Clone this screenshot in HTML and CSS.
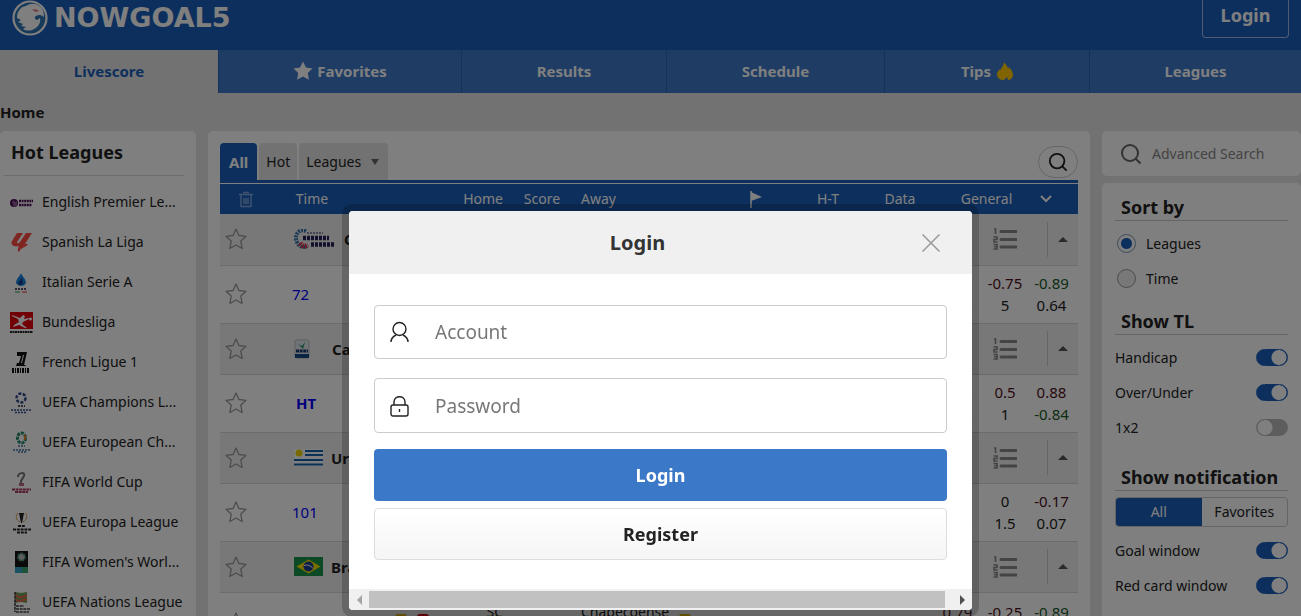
FILE: index.html
```
<!DOCTYPE html>
<html lang="en">
<head>
    <meta charset="UTF-8">
    <meta name="viewport" content="width=device-width, initial-scale=1.0">
    <title>NowGoal Livescore</title>
    <link rel="stylesheet" href="styles.css">
</head>
<body>
    <!-- shared icons -->
    <svg class="sprite" aria-hidden="true">
        <symbol id="star" viewBox="0 0 22 22"><path d="M11 1l2.900 6.500 7.100.8-5.200 4.800 1.300 7.400-6.100-3.500-6.100 3.500 1.300-7.400L1 8.300l7.100-.8z" fill="none" stroke="#999" stroke-width="1.300" stroke-linejoin="round"/></symbol>
        <symbol id="list" viewBox="0 0 24 24">
            <path d="M8 4.500h15M8 12.500h15M8 20h15" stroke="#888" stroke-width="3" stroke-linecap="round"/>
            <path d="M1 2h1.500v5M.5 10H4v2.500H1V15h3.500M.5 17.500H4V22H.5M1 19.700h3" fill="none" stroke="#888" stroke-width="1.600"/>
        </symbol>
        <symbol id="search" viewBox="0 0 22 22"><circle cx="10" cy="10" r="8" fill="none" stroke="currentColor" stroke-width="2"/><path d="M15.500 15.500l5 5" stroke="currentColor" stroke-width="2"/></symbol>
    </svg>

    <header class="header">
        <a href="#" class="logo">
            <svg width="36" height="36" viewBox="0 0 36 36">
                <circle cx="18" cy="18" r="16.500" fill="#2f73b5" stroke="#fff" stroke-width="2.200"/>
                <path d="M5 16C6 10 10 6 14 6c4-3 10-3 13 0 4 2 5 6 5 11-2-2-5-3-8-1-2 1-1 4 1 4l3-2c1 5-2 9-6 11-3 2-8 2-11 0l3-2-5-1 2-2-5-2 3-2-4-2z" fill="#fff"/>
                <path d="M20 10c2-1 5-1 7 1l-3 1z" fill="#e08080"/>
            </svg>
            <span>NOWGOAL5</span>
        </a>
        <button type="button" class="header-login">Login</button>
    </header>

    <nav class="nav">
        <a href="#" class="active">Livescore</a>
        <a href="#"><svg width="20" height="20" viewBox="0 0 20 20"><path d="M10 0.500l3 6 6.500 1-4.700 4.600 1.100 6.600L10 15.600l-5.900 3.100 1.100-6.600L.5 7.500l6.500-1z" fill="#fff"/></svg>Favorites</a>
        <a href="#">Results</a>
        <a href="#">Schedule</a>
        <a href="#">Tips<svg class="flame" width="16" height="20" viewBox="0 0 16 20"><path d="M7 1c1 2 4 4 4 7l1-2c2 2 4 5 4 8 0 3-3 5-5 5l-1-3-2 2-1 1c-4 0-7-2-7-6 0-2 2-4 3-5l1 1c0-3 3-4 3-8z" fill="#ffc800"/></svg></a>
        <a href="#">Leagues</a>
    </nav>

    <div class="breadcrumb">Home</div>

    <div class="page">
        <aside class="card hot">
            <h2>Hot Leagues</h2>
            <ul>
                <li><svg viewBox="0 0 24 24"><circle cx="4" cy="13" r="4" fill="#4a0f55"/><path d="M2 12l2-2 1 2 2-1v4l-3 2" fill="#8d5b96"/><path d="M9 11h14M9 15h13" stroke="#4a0f55" stroke-width="2.500" stroke-dasharray="2 .6"/></svg><a href="#">English Premier Le...</a></li>
                <li><svg viewBox="0 0 24 24"><path d="M7 3h6L7 12c0 2 2 1 3 0l6-9h6l-7 11h3c-2 4-6 2-9 8-2-1-1-4 0-6-5 1-9-1-7-5z" fill="#ff4b44"/></svg><a href="#">Spanish La Liga</a></li>
                <li><svg viewBox="0 0 24 24"><path d="M11 3c1 3 5 6 5 10-2 4-8 4-10 0 0-4 4-7 5-10z" fill="#1683d8"/><path d="M8 13l4-5 1 6-4 1" fill="#123a8c"/><path d="M5 19h12" stroke="#557" stroke-width="2" stroke-dasharray="2 1"/><path d="M5 22h5" stroke="#2a9a50"/><path d="M12 22h5" stroke="#e33"/></svg><a href="#">Italian Serie A</a></li>
                <li><svg viewBox="0 0 24 24"><path d="M0 2h23v17H0z" fill="#e3000f"/><path d="M2 5l8 3 3-3 2 1-1 3 5-1v1l-6 3-1 2 5 4h-2l-6-3-6 2 1-2 5-3-1-3-6-3z" fill="#fff"/><circle cx="20.500" cy="9" r="1.500" fill="#fff"/><path d="M0 22h23" stroke="#222" stroke-width="2" stroke-dasharray="2 .5"/></svg><a href="#">Bundesliga</a></li>
                <li><svg viewBox="0 0 24 24"><path d="M7 2h10l-3 13h2l-1 1H6l1-3h2l2-7H7zM13 5l-2 8h1l2-8z" fill="#111" fill-rule="evenodd"/><path d="M2 20.500h18" stroke="#111" stroke-width="5" stroke-dasharray="2 1 1 1"/></svg><a href="#">French Ligue 1</a></li>
                <li><svg viewBox="0 0 24 24"><circle cx="11" cy="8" r="4.500" fill="none" stroke="#334a8d" stroke-width="2.500" stroke-dasharray="3 1.500"/><path d="M8 16h7" stroke="#556" stroke-width="2" stroke-dasharray="2 1"/><path d="M1 20h20M5 22.500h12" stroke="#334a8d" stroke-width="1.500" stroke-dasharray="2 1"/></svg><a href="#">UEFA Champions L...</a></li>
                <li><svg viewBox="0 0 24 24"><ellipse cx="11.500" cy="8" rx="4" ry="5" fill="none" stroke="#268b6e" stroke-width="3" stroke-dasharray="3 1"/><path d="M15 5v5" stroke="#d97c2c" stroke-width="2"/><path d="M8 16h7M3 20h17M8 22h8" stroke="#4172a5" stroke-width="1.500" stroke-dasharray="2 1"/></svg><a href="#">UEFA European Ch...</a></li>
                <li><svg viewBox="0 0 24 24"><path d="M8 7c0-5 8-5 6-1l-3 5v5" fill="none" stroke="#777" stroke-width="2"/><path d="M9 13h5v3H9z" fill="#b66c80"/><path d="M2 19.500h19M5 22h13" stroke="#a8385a" stroke-width="1.800" stroke-dasharray="3 .6"/></svg><a href="#">FIFA World Cup</a></li>
                <li><svg viewBox="0 0 24 24"><path d="M8 3c-3 3-2 7 2 9M15 3c3 3 2 7-2 9" fill="none" stroke="#d79b50"/><path d="M9 3h5l-2 10h-1z" fill="#222"/><path d="M8 16h7M3 19.500h18M7 22.500h10" stroke="#222" stroke-width="2" stroke-dasharray="3 .8"/></svg><a href="#">UEFA Europa League</a></li>
                <li><svg viewBox="0 0 24 24"><path d="M5 1h13v16H5z" fill="#151515"/><circle cx="11.500" cy="7" r="3.500" fill="#bbb" stroke="#4a9a78" stroke-width="2" stroke-dasharray="2 1"/><path d="M5 17h7v6H5z" fill="#35a5c7"/><path d="M12 17h6v6h-6z" fill="#3aa870"/></svg><a href="#">FIFA Women's Worl...</a></li>
                <li><svg viewBox="0 0 24 24"><path d="M5 2l6 1 6-1v11l-6-1-6 1z" fill="#6fa05c"/><path d="M5 5l6 3 6-3M5 10l6 1 6-2" fill="none" stroke="#e46a4a" stroke-width="2"/><path d="M5 2v20M6 16h8M6 19h14M6 22h13" stroke="#444" stroke-width="1.600" stroke-dasharray="3 .7"/></svg><a href="#">UEFA Nations League</a></li>
            </ul>
        </aside>

        <main class="card matches">
            <div class="tabs">
                <button type="button" class="tab on">All</button>
                <button type="button" class="tab">Hot</button>
                <button type="button" class="tab">Leagues<i class="caret"></i></button>
                <button type="button" class="tab-search" aria-label="Search"><svg width="20" height="20"><use href="#search"/></svg></button>
            </div>
            <table class="live">
                <colgroup>
                    <col class="c-star"><col class="c-time"><col class="c-home"><col class="c-score"><col>
                    <col class="c-mid"><col class="c-mid"><col class="c-mid"><col class="c-o1"><col class="c-o2"><col class="c-o3">
                </colgroup>
                <thead>
                    <tr>
                        <th><svg width="16" height="17" viewBox="0 0 16 17"><path d="M1 3.500h14M5 1.500h6M3 4v11.500h10V4M6 7v6M8 7v6M10 7v6" fill="none" stroke="#7fa6dc" stroke-width="1.400"/></svg></th>
                        <th>Time</th>
                        <th class="right">Home</th>
                        <th>Score</th>
                        <th class="left">Away</th>
                        <th><svg width="12" height="17" viewBox="0 0 12 17"><path d="M1 0v17" stroke="#fff" stroke-width="1.500"/><path d="M1 1l11 5-11 4z" fill="#fff"/></svg></th>
                        <th>H-T</th>
                        <th>Data</th>
                        <th colspan="2" class="general">General</th>
                        <th class="more"><svg width="12" height="8" viewBox="0 0 12 8"><path d="M1 1l5 5 5-5" fill="none" stroke="#fff" stroke-width="2"/></svg></th>
                    </tr>
                </thead>
                <tbody>
                    <tr class="league">
                        <td class="fav"><svg width="22" height="22"><use href="#star"/></svg></td>
                        <td colspan="8" class="name"><div><svg width="42" height="20" viewBox="0 0 42 20"><path d="M12 2C4-1 0 7 3 13c2 5 6 6 10 4" fill="none" stroke="#3976a8" stroke-width="4" stroke-dasharray="2 1"/><path d="M6 14c2 3 4 4 8 2" fill="none" stroke="#d8364c" stroke-width="5" stroke-dasharray="2 1"/><path d="M13 4h16" stroke="#88a" stroke-width="2" stroke-dasharray="2 1"/><path d="M9 9h26M17 15.500h24" stroke="#252058" stroke-width="4.500" stroke-dasharray="3 1"/></svg>CONCACAF</div></td>
                        <td><svg width="24" height="24"><use href="#list"/></svg></td>
                        <td class="fold"><div><i class="up"></i></div></td>
                    </tr>
                    <tr class="match">
                        <td class="fav"><svg width="22" height="22"><use href="#star"/></svg></td>
                        <td class="time">72</td>
                        <td colspan="6"></td>
                        <td>0.7<br>0.93</td>
                        <td><span class="down">-0.75</span><br>5</td>
                        <td class="last"><span class="win">-0.89</span><br>0.64</td>
                    </tr>
                    <tr class="league">
                        <td class="fav"><svg width="22" height="22"><use href="#star"/></svg></td>
                        <td colspan="8" class="name"><div><svg width="16" height="20" viewBox="0 0 16 20"><rect x="1" y="1" width="14" height="18" rx="2" fill="#e2e8ee" stroke="#bbb"/><path d="M4 5l4 2 3-4-2 7z" fill="#29966b"/><path d="M2 12h12" stroke="#183b70" stroke-width="3" stroke-dasharray="3 .6"/><path d="M1 15h14v4H1z" fill="#164984"/></svg><span class="gap">Ca</span></div></td>
                        <td><svg width="24" height="24"><use href="#list"/></svg></td>
                        <td class="fold"><div><i class="up"></i></div></td>
                    </tr>
                    <tr class="match">
                        <td class="fav"><svg width="22" height="22"><use href="#star"/></svg></td>
                        <td class="time half">HT</td>
                        <td colspan="6"></td>
                        <td><span class="down">0.93</span><br><span class="win">0.92</span></td>
                        <td><span class="down">0.5</span><br>1</td>
                        <td class="last"><span class="down">0.88</span><br><span class="win">-0.84</span></td>
                    </tr>
                    <tr class="league">
                        <td class="fav"><svg width="22" height="22"><use href="#star"/></svg></td>
                        <td colspan="8" class="name"><div><svg width="29" height="19" viewBox="0 0 29 19"><path d="M0 1h29v17H0z" fill="#fff"/><path d="M11 3h18M11 7h18M0 12h29M0 16.500h29" stroke="#1765ad" stroke-width="2"/><circle cx="5" cy="5" r="3.500" fill="#f2d400"/></svg>Uruguay</div></td>
                        <td><svg width="24" height="24"><use href="#list"/></svg></td>
                        <td class="fold"><div><i class="up"></i></div></td>
                    </tr>
                    <tr class="match">
                        <td class="fav"><svg width="22" height="22"><use href="#star"/></svg></td>
                        <td class="time">101</td>
                        <td colspan="6"></td>
                        <td>0.7<br>0.93</td>
                        <td>0<br>1.5</td>
                        <td class="last"><span class="down">-0.17</span><br>0.07</td>
                    </tr>
                    <tr class="league">
                        <td class="fav"><svg width="22" height="22"><use href="#star"/></svg></td>
                        <td colspan="8" class="name"><div><svg width="29" height="19" viewBox="0 0 29 19"><path d="M0 0h29v19H0z" fill="#17954b"/><path d="M14.500 2.500l12 7-12 7-12-7z" fill="#f5dc00"/><circle cx="14.500" cy="9.500" r="5" fill="#1b3f91"/><path d="M10 8.500c3-1 7 0 9 3" fill="none" stroke="#fff"/></svg>Brazil</div></td>
                        <td><svg width="24" height="24"><use href="#list"/></svg></td>
                        <td class="fold"><div><i class="up"></i></div></td>
                    </tr>
                    <tr class="match tall">
                        <td class="fav"><svg width="22" height="22"><use href="#star"/></svg></td>
                        <td></td>
                        <td class="home"><div><i class="booking"></i><i class="booking red"></i><span>SC</span></div></td>
                        <td></td>
                        <td class="away" colspan="2"><div><span>Chapecoense</span><i class="booking"></i></div></td>
                        <td></td>
                        <td><div class="tools"><svg width="14" height="12" viewBox="0 0 14 12"><path d="M0 5c4-5 6-4 8-2s4-1 6-2" fill="none" stroke="#555" stroke-width="2"/></svg><svg width="16" height="12" viewBox="0 0 16 12"><path d="M1 1h14v10H1z" fill="none" stroke="#2e6b2e" stroke-width="2"/></svg></div></td>
                        <td><span class="down">0.79</span><br>0.93</td>
                        <td><span class="down">-0.25</span><br>2</td>
                        <td class="last"><span class="win">-0.89</span><br>0.95</td>
                    </tr>
                </tbody>
            </table>
        </main>

        <aside class="side">
            <label class="card advanced">
                <svg width="22" height="22"><use href="#search"/></svg>
                <input type="text" placeholder="Advanced Search">
            </label>
            <div class="card settings">
                <h3>Sort by</h3>
                <label class="radio"><input type="radio" name="sort" checked>Leagues</label>
                <label class="radio"><input type="radio" name="sort">Time</label>
                <h3>Show TL</h3>
                <label class="switch">Handicap<input type="checkbox" checked></label>
                <label class="switch">Over/Under<input type="checkbox" checked></label>
                <label class="switch">1x2<input type="checkbox"></label>
                <h3 class="notify">Show notification</h3>
                <div class="segment">
                    <button type="button" class="on">All</button>
                    <button type="button">Favorites</button>
                </div>
                <label class="switch">Goal window<input type="checkbox" checked></label>
                <label class="switch">Red card window<input type="checkbox" checked></label>
            </div>
        </aside>
    </div>

    <div class="overlay">
        <div class="modal" role="dialog" aria-labelledby="loginTitle">
            <div class="modal-head">
                <h2 id="loginTitle">Login</h2>
                <button type="button" class="close" aria-label="Close"><svg width="18" height="18" viewBox="0 0 18 18"><path d="M.5.5l17 17M17.500.5l-17 17" stroke="#999" stroke-width="1.500"/></svg></button>
            </div>
            <form class="login-form">
                <label class="field">
                    <svg width="20" height="22" viewBox="0 0 20 22"><circle cx="9.500" cy="8" r="6.500" fill="none" stroke="#222" stroke-width="1.400"/><path d="M1 21c0-4 3-6 5-7M18 21c0-4-3-6-5-7" fill="none" stroke="#222" stroke-width="1.400"/></svg>
                    <input type="text" name="account" placeholder="Account">
                </label>
                <label class="field password">
                    <svg width="20" height="22" viewBox="0 0 20 22"><rect x="1" y="10" width="17" height="11" rx="2" fill="none" stroke="#222" stroke-width="1.400"/><path d="M4 10V7c0-7 11-7 11 0v3M9.500 14v3" fill="none" stroke="#222" stroke-width="1.400"/></svg>
                    <input type="password" name="password" placeholder="Password">
                </label>
                <button type="button" class="btn primary">Login</button>
                <button type="button" class="btn">Register</button>
            </form>
            <div class="scrollbar"><i class="arrow prev"></i><div class="thumb"></div><i class="arrow next"></i></div>
        </div>
    </div>
</body>
</html>
```
FILE: styles.css
```
* {
    box-sizing: border-box;
}
body {
    margin: 0;
    height: 100vh;
    overflow: hidden;
    background: #e4e4e4;
    color: #222;
    font-family: "Noto Sans", "Open Sans", sans-serif;
    font-size: 14px;
    line-height: 22px;
}
a {
    color: inherit;
    text-decoration: none;
}
button, input {
    font: inherit;
    color: inherit;
    margin: 0;
}
button {
    border: none;
    background: none;
    padding: 0;
    cursor: pointer;
}
h2, h3, ul {
    margin: 0;
    padding: 0;
}
svg {
    display: block;
    flex: none;
}
.sprite {
    display: none;
}
.card {
    background: #fff;
    border-radius: 5px;
}

/* header */
.header {
    display: flex;
    justify-content: space-between;
    align-items: flex-start;
    height: 50px;
    padding: 0 12px;
    background: #1b5fbb;
    color: #fff;
}
.logo {
    display: flex;
    align-items: center;
    gap: 6px;
    font-family: "DejaVu Sans", sans-serif;
    font-size: 27px;
    font-weight: bold;
    line-height: 36px;
}
.header-login {
    width: 87px;
    height: 38px;
    padding-bottom: 7px;
    border: 1px solid #9bbbe6;
    border-top: none;
    border-radius: 0 0 4px 4px;
    font-size: 18px;
    font-weight: bold;
}
.nav {
    display: grid;
    grid-template-columns: 219fr 243fr 205fr 218fr 205fr 211fr;
    height: 43px;
    background: #3c78c8;
    color: #fff;
    font-size: 15px;
    font-weight: bold;
}
.nav a {
    display: flex;
    align-items: center;
    justify-content: center;
    gap: 4px;
    padding-bottom: 2px;
    border-right: 1px solid #2a62ae;
}
.nav a:last-child {
    border-right: none;
}
.nav .active {
    background: #e4e4e4;
    color: #1b5fbb;
}
.flame {
    margin-left: 2px;
}
.breadcrumb {
    padding: 8px 0;
    font-size: 15px;
    font-weight: bold;
}
.page {
    display: grid;
    grid-template-columns: 196px 1fr 199px;
    gap: 12px;
}

/* hot leagues */
.hot {
    padding: 0 12px 0 4px;
}
.hot h2 {
    height: 45px;
    padding-left: 7px;
    border-bottom: 1px solid #d8d8d8;
    font-size: 18px;
    line-height: 43px;
}
.hot ul {
    padding-top: 6px;
    list-style: none;
}
.hot li {
    display: flex;
    align-items: center;
    gap: 8px;
    height: 40px;
    padding-left: 6px;
    white-space: nowrap;
}
.hot li svg {
    width: 24px;
    height: 24px;
}

/* match list */
.matches {
    padding: 12px 12px 0;
}
.tabs {
    display: flex;
    gap: 2px;
    margin-bottom: 1px;
    border-bottom: 3px solid #1b5fbb;
}
.tab {
    display: flex;
    align-items: center;
    gap: 10px;
    height: 37px;
    padding: 0 7px;
    border-radius: 4px 4px 0 0;
    background: #e4e4e4;
}
.tab.on {
    padding: 0 9px;
    background: #1b5fbb;
    color: #fff;
    font-size: 15px;
    font-weight: bold;
}
.caret {
    margin-right: 2px;
    border: 4px solid transparent;
    border-top: 6px solid #666;
    border-bottom: none;
}
.tab-search {
    display: flex;
    align-items: center;
    justify-content: center;
    width: 40px;
    height: 32px;
    margin: 3px 0 0 auto;
    border: 1px solid #ccc;
    border-radius: 16px;
}
.live {
    width: 100%;
    table-layout: fixed;
    border-collapse: collapse;
    text-align: center;
    white-space: nowrap;
}
.c-star {
    width: 52px;
}
.c-time {
    width: 80px;
}
.c-home {
    width: 151px;
}
.c-score {
    width: 78px;
}
.c-mid {
    width: 72px;
}
.c-o1 {
    width: 43px;
}
.c-o2 {
    width: 52px;
}
.c-o3 {
    width: 47px;
}
.live th, .live td {
    padding: 0;
}
.live svg {
    margin: 0 auto;
}
.live th {
    height: 30px;
    background: #1b5fbb;
    color: #fff;
    font-weight: normal;
}
.live .right {
    text-align: right;
}
.live .left {
    text-align: left;
}
.live .general {
    padding-left: 6px;
}
.live .more {
    padding-right: 18px;
}
.league td, .match td {
    border-bottom: 1px solid #d8d8d8;
    font-size: 15px;
}
.league td {
    height: 51px;
    background: #f1f1f1;
}
.match td {
    height: 58px;
}
.match.tall td {
    height: 61px;
}
.live .fav {
    padding-left: 5px;
}
.live .fav svg, .live .name svg {
    margin: 0;
}
.live .name {
    padding-left: 22px;
    font-weight: bold;
}
.name div {
    display: flex;
    align-items: center;
    gap: 8px;
}
.gap {
    padding-left: 14px;
}
.fold div {
    display: flex;
    align-items: center;
    justify-content: center;
    height: 35px;
    margin-left: 16px;
    border-left: 1px solid #ccc;
}
.up {
    border: 5px solid transparent;
    border-bottom: 5px solid #555;
    border-top: none;
}
.live .time {
    padding-left: 20px;
    color: #00f;
    text-align: left;
}
.live .half {
    padding-left: 24px;
    font-weight: bold;
}
.live .last {
    padding-right: 6px;
}
.down {
    color: #501020;
}
.win {
    color: #1a5b2a;
}
.home div, .away div {
    display: flex;
    gap: 10px;
    height: 44px;
    font-size: 14px;
}
.home span {
    margin-left: auto;
}
.home div {
    padding-left: 43px;
}
.booking {
    width: 12px;
    height: 16px;
    margin-top: 13px;
    border-radius: 3px;
    background: #f0c000;
}
.booking.red {
    background: #e60012;
}
.tools {
    display: flex;
    gap: 6px;
    padding-top: 12px;
}

/* right column */
.advanced {
    display: flex;
    align-items: center;
    gap: 8px;
    height: 45px;
    margin-bottom: 7px;
    padding-left: 18px;
    color: #666;
}
.advanced input {
    width: 100%;
    min-width: 0;
    border: none;
    background: none;
    outline: none;
}
.advanced input::placeholder {
    color: #888;
}
.settings {
    padding: 10px 13px 32px;
}
.settings h3 {
    height: 28px;
    margin: 11px 0 5px;
    padding-left: 6px;
    border-bottom: 1px solid #ccc;
    font-size: 18px;
    line-height: 28px;
    white-space: nowrap;
}
.settings h3:first-child {
    margin-top: 0;
}
.settings .notify {
    margin: 18px 0 6px;
}
.radio, .switch {
    display: flex;
    align-items: center;
    height: 35px;
}
.radio {
    gap: 10px;
    padding-left: 2px;
}
.radio input {
    appearance: none;
    width: 19px;
    height: 19px;
    border: 1px solid #999;
    border-radius: 50%;
    background: #f0f0f0;
}
.radio input:checked {
    border-color: #7f95b5;
    background: radial-gradient(circle, #1b5fbb 5px, transparent 6px);
}
.switch {
    justify-content: space-between;
}
.switch input {
    appearance: none;
    width: 32px;
    height: 17px;
    border: 1px solid #bbb;
    border-radius: 9px;
    background: radial-gradient(circle at 8px 50%, #fff 7px, #bbb 8px);
}
.switch input:checked {
    border-color: #1b5fbb;
    background: radial-gradient(circle at 22px 50%, #fff 7px, #1b5fbb 8px);
}
.segment {
    display: grid;
    grid-template-columns: 1fr 1fr;
    height: 30px;
    margin-bottom: 6px;
    border: 1px solid #ccc;
    border-radius: 4px;
    overflow: hidden;
}
.segment .on {
    background: #1b5fbb;
    color: #fff;
}

/* login dialog */
.overlay {
    position: fixed;
    inset: 0;
    display: flex;
    justify-content: center;
    align-items: flex-start;
    padding: 211px 0 0 20px;
    background: rgba(0, 0, 0, 0.5);
}
.modal {
    width: 623px;
    border-radius: 4px;
    background: #fff;
    box-shadow: 0 0 0 7px rgba(0, 0, 0, 0.2);
    overflow: hidden;
}
.modal-head {
    display: flex;
    align-items: center;
    height: 63px;
    padding: 0 32px;
    background: #f0f0f0;
}
.modal-head h2 {
    flex: 1;
    padding-right: 28px;
    color: #333;
    font-size: 20px;
    text-align: center;
}
.login-form {
    display: flex;
    flex-direction: column;
    padding: 31px 25px 29px;
}
.field {
    display: flex;
    align-items: center;
    gap: 25px;
    height: 54px;
    margin-bottom: 19px;
    padding: 0 15px;
    border: 1px solid #ccc;
    border-radius: 4px;
}
.field.password {
    height: 55px;
    margin-bottom: 16px;
}
.field input {
    flex: 1;
    padding: 0;
    border: none;
    outline: none;
    background: none;
    font-size: 19px;
}
.field input::placeholder {
    color: #777;
}
.btn {
    height: 52px;
    border: 1px solid #ddd;
    border-radius: 4px;
    background: linear-gradient(#fff, #f5f5f5);
    font-size: 18px;
    font-weight: bold;
}
.btn.primary {
    margin-bottom: 7px;
    border: none;
    background: #3c78c8;
    color: #fff;
}
.scrollbar {
    display: flex;
    align-items: center;
    height: 21px;
    background: #f0f0f0;
}
.thumb {
    flex: 1;
    height: 17px;
    margin: 0 7px;
    background: #c1c1c1;
}
.arrow {
    border: 5px solid transparent;
}
.arrow.prev {
    margin-left: 8px;
    border-left: none;
    border-right-color: #a3a3a3;
}
.arrow.next {
    margin: 0 7px 0 8px;
    border-right: none;
    border-left-color: #505050;
}
```
